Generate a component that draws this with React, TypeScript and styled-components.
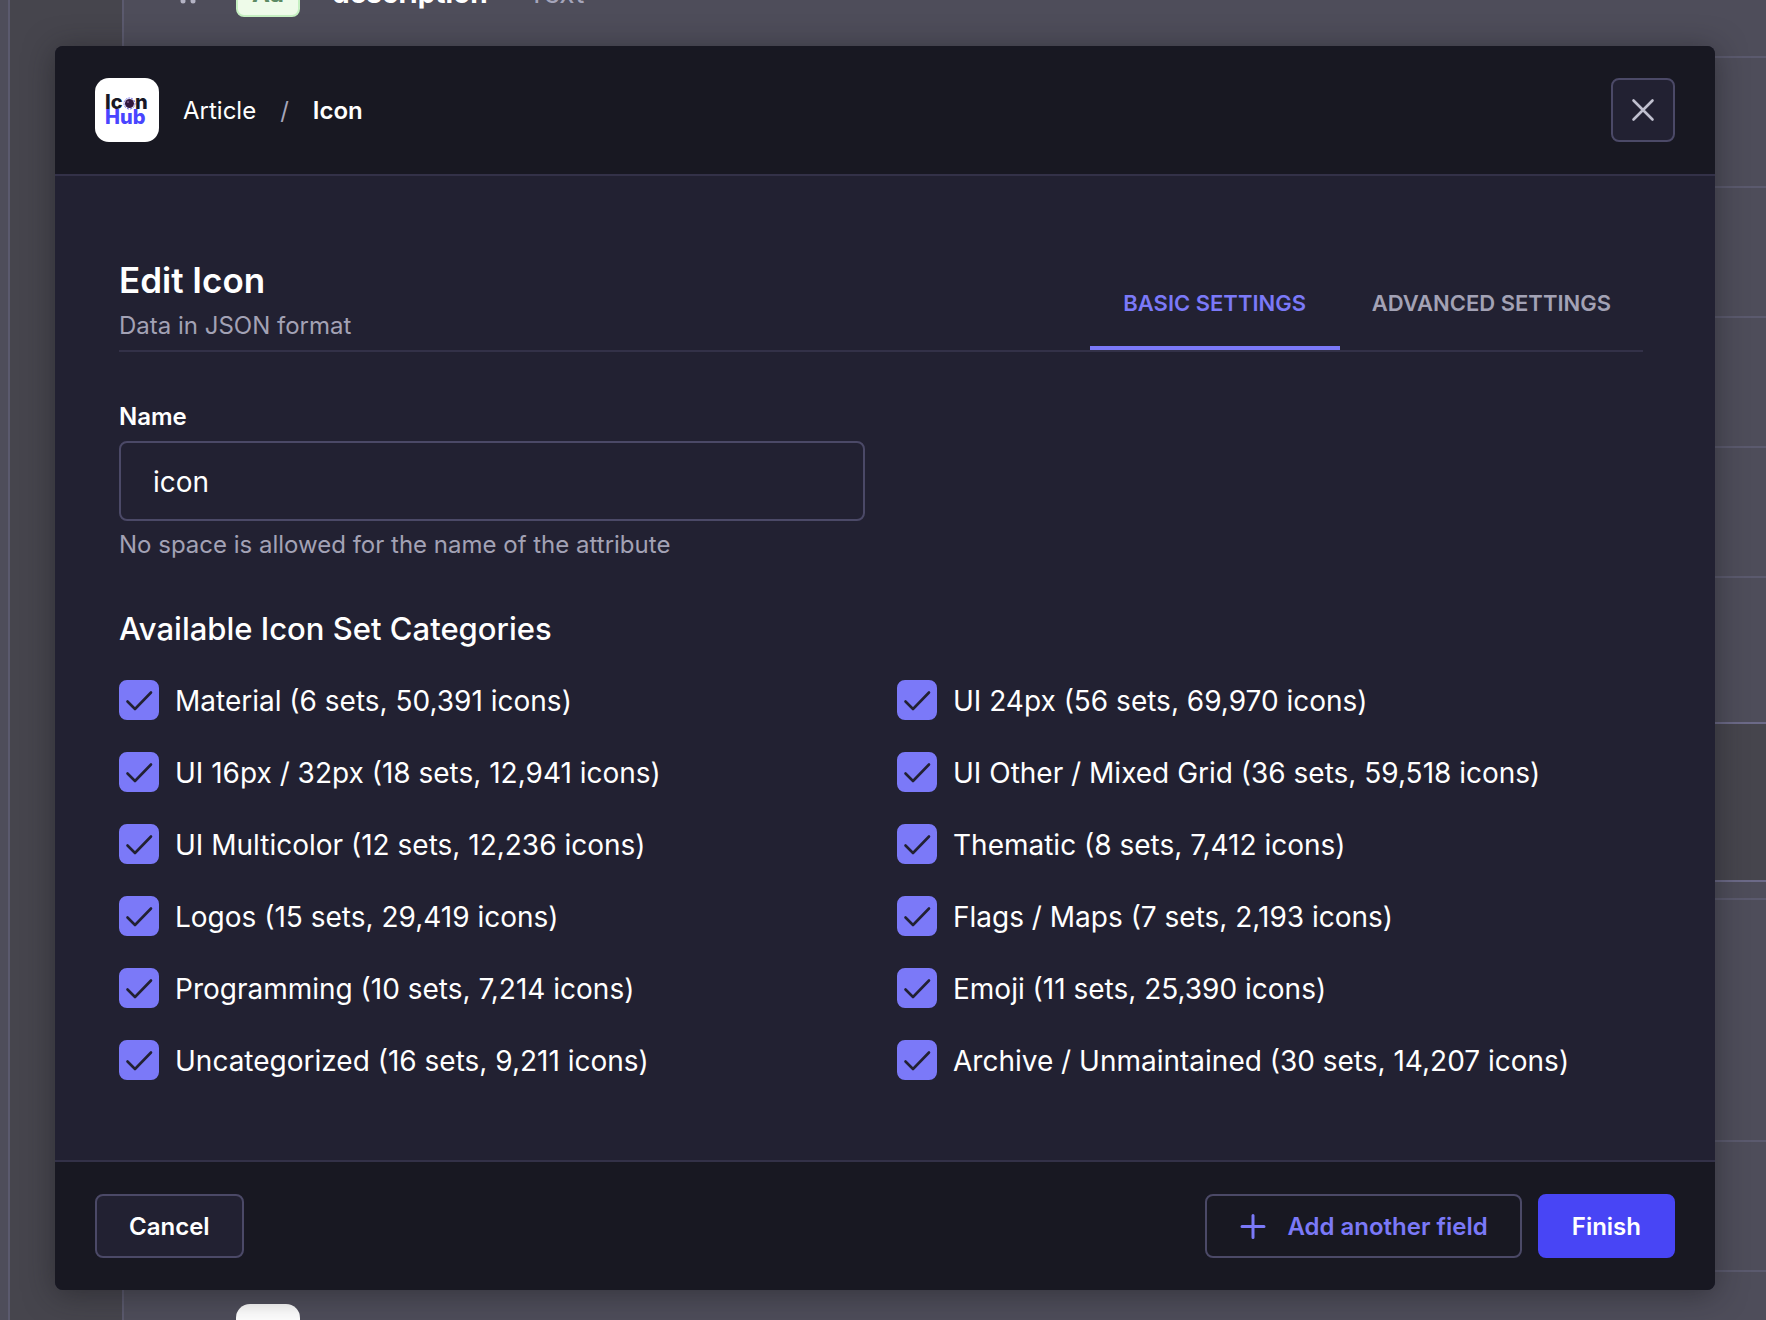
import React, { useState } from "react";
import styled, { createGlobalStyle } from "styled-components";

const GlobalStyle = createGlobalStyle`
  *, *::before, *::after { box-sizing: border-box; }
  body {
    margin: 0;
    background: #46454d;
    color: #ffffff;
    font-family: Inter, "Liberation Sans", sans-serif;
    font-size: 24px;
    line-height: 32px;
    overflow: hidden;
  }
  h2, h3, p { margin: 0; }
  button, input { font: inherit; color: inherit; }
`;

const Screen = styled.div`
  position: relative;
  height: 100vh;
  overflow: hidden;
`;

const Backdrop = styled.div`
  display: flex;
  height: 100%;
`;

const SideNav = styled.div`
  flex: none;
  width: 10px;
  background: #4e4d5a;
  border-right: 2px solid #5b5a6e;
`;

const Page = styled.div`
  flex: 1;
  padding-left: 112px;
`;

const Card = styled.div`
  background: #4e4d5a;
  border-left: 2px solid #5b5a6e;
`;

const Row = styled.div<{ $height: number; $strong?: boolean }>`
  display: flex;
  align-items: flex-end;
  height: ${(p) => p.$height}px;
  border-bottom: 2px solid ${(p) => (p.$strong ? "#6c6a88" : "#5b5a6e")};
`;

const FieldRow = styled(Row)`
  align-items: center;
  margin-top: -70px;
  padding-left: 52px;
`;

const DragHandle = styled.svg`
  width: 24px;
  height: 24px;
  margin-right: 36px;
`;

const TypeBadge = styled.span`
  width: 64px;
  height: 48px;
  border: 2px solid #c6f0c2;
  border-radius: 8px;
  background: #eefbe9;
  color: #5c8a63;
  font-weight: 700;
  line-height: 46px;
  text-align: center;
`;

const FieldName = styled.span`
  margin-left: 32px;
  font-size: 28px;
  font-weight: 700;
`;

const FieldType = styled.span`
  margin-left: 40px;
  font-size: 28px;
  color: #a5a5ba;
`;

const Gap = styled.div`
  height: 156px;
  margin-left: -2px;
  background: #46454d;
`;

const NextRow = styled.div`
  padding: 32px 112px;
`;

const Tile = styled.div`
  width: 64px;
  height: 64px;
  border-radius: 14px;
  background: #ffffff;
`;

const Overlay = styled.div`
  position: absolute;
  inset: 0;
  padding: 46px 51px 0 55px;
`;

const Dialog = styled.section`
  border-radius: 8px;
  overflow: hidden;
  background: #222132;
  box-shadow: 0 4px 30px rgba(26, 26, 30, 0.5);
`;

const Header = styled.header`
  display: flex;
  align-items: center;
  justify-content: space-between;
  padding: 32px 40px;
  background: #181822;
  border-bottom: 2px solid #333148;
`;

const Breadcrumb = styled.nav`
  display: flex;
  align-items: center;
  gap: 24px;
`;

const Crumb = styled.a`
  padding-top: 2px;
  color: #ffffff;
  text-decoration: none;
`;

const Separator = styled.span`
  padding-top: 2px;
  color: #a5a5ba;
`;

const Current = styled.span`
  padding-top: 2px;
  font-weight: 600;
`;

const Logo = styled.svg`
  display: block;
  width: 64px;
  height: 64px;
`;

const Button = styled.button<{ $kind: "neutral" | "outline" | "primary" | "icon" }>`
  display: inline-flex;
  align-items: center;
  justify-content: center;
  gap: 20px;
  height: 64px;
  min-width: 64px;
  padding: ${(p) => (p.$kind === "icon" ? "0" : "2px 32px 0")};
  border: 2px solid ${(p) => (p.$kind === "primary" ? "#4845f5" : "#4b4967")};
  border-radius: 8px;
  background: ${(p) =>
    p.$kind === "primary" ? "#4845f5" : p.$kind === "outline" ? "transparent" : "#222132"};
  color: ${(p) => (p.$kind === "outline" ? "#7b79f8" : p.$kind === "icon" ? "#c0c0cf" : "#ffffff")};
  font-weight: 600;
  cursor: pointer;
`;

const Body = styled.div`
  padding: 80px 72px 80px 64px;
`;

const TitleBar = styled.div`
  display: flex;
  align-items: flex-end;
  justify-content: space-between;
  border-bottom: 2px solid #333148;
`;

const TitleBlock = styled.div`
  padding-bottom: 8px;
`;

const Title = styled.h2`
  margin-bottom: 6px;
  font-size: 35px;
  font-weight: 600;
  line-height: 48px;
`;

const Muted = styled.p`
  color: #a3a2b5;
`;

const Tabs = styled.div`
  display: flex;
`;

const Tab = styled.button<{ $active: boolean }>`
  min-width: 250px;
  height: 94px;
  padding: 4px 32px 0;
  border: 0;
  border-bottom: 4px solid ${(p) => (p.$active ? "#7b79f8" : "transparent")};
  background: none;
  color: ${(p) => (p.$active ? "#7b79f8" : "#a3a2b5")};
  font-size: 22px;
  font-weight: 600;
  text-transform: uppercase;
  cursor: pointer;
`;

const Columns = styled.div`
  display: grid;
  grid-template-columns: 1fr 1fr;
  gap: 32px;
`;

const NameField = styled.div`
  display: grid;
  gap: 8px;
  padding-top: 49px;
`;

const Label = styled.label`
  font-weight: 600;
`;

const TextInput = styled.input`
  width: 100%;
  height: 80px;
  padding: 2px 32px 0;
  border: 2px solid #4b4967;
  border-radius: 8px;
  background: #222132;
  font-size: 28px;
`;

const SectionTitle = styled.h3`
  margin: 48px 0 31px;
  font-size: 31px;
  font-weight: 500;
  line-height: 40px;
`;

const Option = styled.label`
  display: flex;
  align-items: center;
  gap: 16px;
  height: 40px;
  font-size: 28px;
  white-space: nowrap;
  cursor: pointer;
`;

const OptionText = styled.span`
  padding-top: 2px;
`;

const CheckFrame = styled.span`
  display: grid;
  flex: none;
  width: 40px;
  height: 40px;

  > * { grid-area: 1 / 1; }
`;

const CheckInput = styled.input`
  appearance: none;
  width: 40px;
  height: 40px;
  margin: 0;
  border: 2px solid #4b4967;
  border-radius: 8px;

  &:checked {
    border-color: #7b79f8;
    background: #7b79f8;
  }
  &:not(:checked) + svg { visibility: hidden; }
`;

const Tick = styled.svg`
  width: 40px;
  height: 40px;
  pointer-events: none;
`;

const Footer = styled.footer`
  display: flex;
  align-items: center;
  justify-content: space-between;
  padding: 32px 40px;
  background: #181822;
  border-top: 2px solid #333148;
`;

const Actions = styled.div`
  display: flex;
  gap: 16px;
`;

const categories = [
  "Material (6 sets, 50,391 icons)",
  "UI 24px (56 sets, 69,970 icons)",
  "UI 16px / 32px (18 sets, 12,941 icons)",
  "UI Other / Mixed Grid (36 sets, 59,518 icons)",
  "UI Multicolor (12 sets, 12,236 icons)",
  "Thematic (8 sets, 7,412 icons)",
  "Logos (15 sets, 29,419 icons)",
  "Flags / Maps (7 sets, 2,193 icons)",
  "Programming (10 sets, 7,214 icons)",
  "Emoji (11 sets, 25,390 icons)",
  "Uncategorized (16 sets, 9,211 icons)",
  "Archive / Unmaintained (30 sets, 14,207 icons)",
];

const tabs = ["Basic settings", "Advanced settings"];

function IconHubLogo() {
  return (
    <Logo viewBox="0 0 64 64" role="img" aria-label="Icon Hub">
      <rect width="64" height="64" rx="14" fill="#fff" />
      <g fontFamily="Inter, sans-serif" fontWeight="800" fontSize="20">
        <text x="10" y="31" fill="#181826">Ic</text>
        <text x="40" y="31" fill="#181826">n</text>
        <text x="10" y="46" fill="#4945ff">Hub</text>
      </g>
      <circle cx="34.5" cy="25.5" r="5.5" fill="#fff" stroke="#6b67e8" strokeWidth="1" strokeDasharray="2 1" />
      <circle cx="34.5" cy="25.5" r="4.5" fill="#32183f" />
      <circle cx="33" cy="24" r="1" fill="#7a5a86" />
    </Logo>
  );
}

function CategoryOption({ label }: { label: string }) {
  return (
    <Option>
      <CheckFrame>
        <CheckInput type="checkbox" defaultChecked />
        <Tick viewBox="0 0 40 40" aria-hidden="true">
          <path
            d="M8.500 21.500l7.500 7.500L32 12.500"
            fill="none"
            stroke="#222132"
            strokeWidth="2.6"
            strokeLinecap="round"
            strokeLinejoin="round"
          />
        </Tick>
      </CheckFrame>
      <OptionText>{label}</OptionText>
    </Option>
  );
}

export default function App() {
  const [active, setActive] = useState(0);
  const [name, setName] = useState("icon");

  return (
    <Screen>
      <GlobalStyle />
      <Backdrop aria-hidden="true">
        <SideNav />
        <Page>
          <Card>
            <FieldRow $height={128}>
              <DragHandle viewBox="0 0 24 24" fill="#b4b3c4">
                <circle cx="7" cy="4" r="2.500" />
                <circle cx="17" cy="4" r="2.500" />
                <circle cx="7" cy="12" r="2.500" />
                <circle cx="17" cy="12" r="2.500" />
                <circle cx="7" cy="20" r="2.500" />
                <circle cx="17" cy="20" r="2.500" />
              </DragHandle>
              <TypeBadge>Aa</TypeBadge>
              <FieldName>description</FieldName>
              <FieldType>Text</FieldType>
            </FieldRow>
            <Row $height={130} />
            <Row $height={130} />
            <Row $height={130} />
            <Row $height={130} />
            <Row $height={146} $strong />
            <Gap />
            <Row $height={2} $strong />
            <Row $height={18} />
            <Row $height={242} />
            <Row $height={130} />
            <NextRow>
              <Tile />
            </NextRow>
          </Card>
        </Page>
      </Backdrop>

      <Overlay>
        <Dialog role="dialog" aria-modal="true" aria-labelledby="dialog-title">
          <Header>
            <Breadcrumb aria-label="Breadcrumb">
              <IconHubLogo />
              <Crumb href="#article">Article</Crumb>
              <Separator>/</Separator>
              <Current aria-current="page">Icon</Current>
            </Breadcrumb>
            <Button $kind="icon" type="button" aria-label="Close">
              <svg width="24" height="24" viewBox="0 0 24 24" fill="none" stroke="currentColor" strokeWidth="2.6" strokeLinecap="round">
                <path d="M2.500 2.500l19 19M21.500 2.500l-19 19" />
              </svg>
            </Button>
          </Header>

          <Body>
            <TitleBar>
              <TitleBlock>
                <Title id="dialog-title">Edit Icon</Title>
                <Muted>Data in JSON format</Muted>
              </TitleBlock>
              <Tabs role="tablist">
                {tabs.map((tab, i) => (
                  <Tab
                    key={tab}
                    type="button"
                    role="tab"
                    aria-selected={i === active}
                    $active={i === active}
                    onClick={() => setActive(i)}
                  >
                    {tab}
                  </Tab>
                ))}
              </Tabs>
            </TitleBar>

            <Columns>
              <NameField>
                <Label htmlFor="name">Name</Label>
                <TextInput id="name" value={name} onChange={(e) => setName(e.target.value)} />
                <Muted>No space is allowed for the name of the attribute</Muted>
              </NameField>
            </Columns>

            <SectionTitle>Available Icon Set Categories</SectionTitle>
            <Columns>
              {categories.map((label) => (
                <CategoryOption key={label} label={label} />
              ))}
            </Columns>
          </Body>

          <Footer>
            <Button $kind="neutral" type="button">Cancel</Button>
            <Actions>
              <Button $kind="outline" type="button">
                <svg width="28" height="28" viewBox="0 0 28 28" fill="none" stroke="currentColor" strokeWidth="3" strokeLinecap="round">
                  <path d="M14 2.500v22M3 13.500h22" />
                </svg>
                Add another field
              </Button>
              <Button $kind="primary" type="button">Finish</Button>
            </Actions>
          </Footer>
        </Dialog>
      </Overlay>
    </Screen>
  );
}
